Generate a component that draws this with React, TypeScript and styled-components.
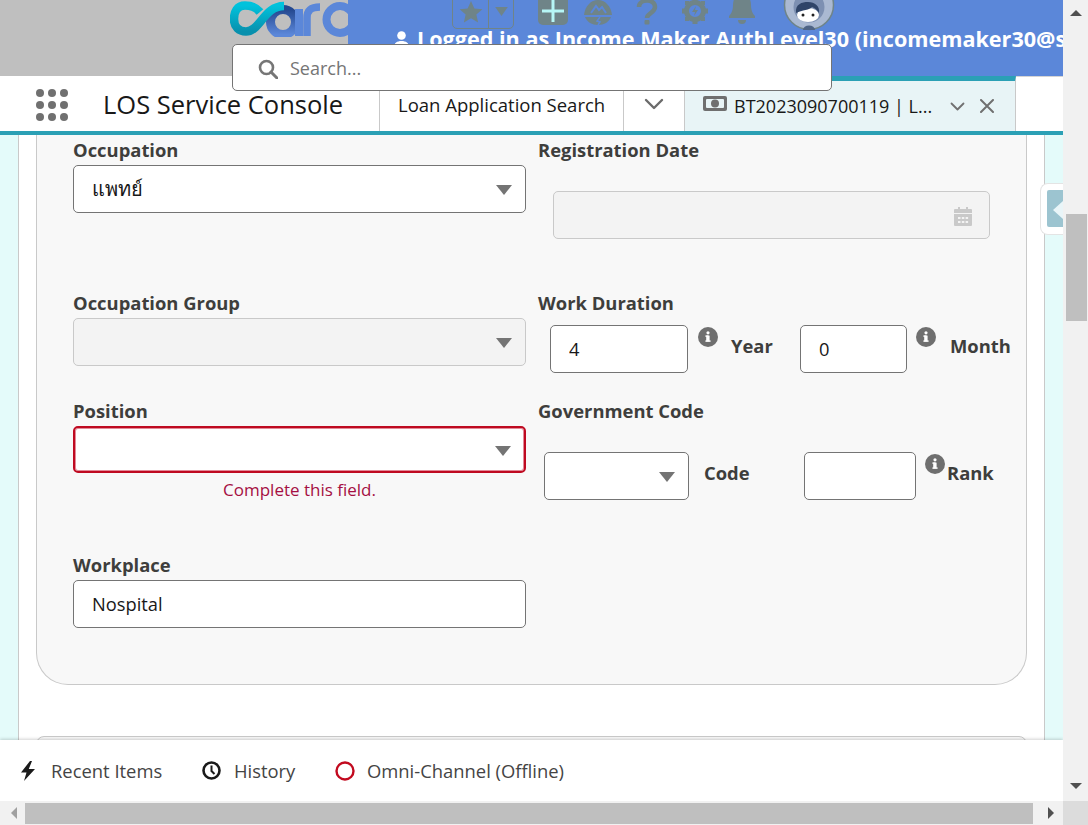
import React from "react";
import styled, { createGlobalStyle } from "styled-components";

const Global = createGlobalStyle`
  html, body { margin: 0; padding: 0; overflow: hidden; background: #fff; }
  * { box-sizing: border-box; }
  body { font-family: "Open Sans", "Noto Sans", "Liberation Sans", sans-serif; color: #181818; }
`;

const Page = styled.div`
  width: 1088px; height: 825px; display: grid; overflow: hidden;
  grid-template-columns: 1063px 25px; grid-template-rows: 801px 24px; position: relative;
`;
const Main = styled.main`display: flex; flex-direction: column; height: 801px; overflow: hidden; position: relative;`;

const Header = styled.header`height: 76px; flex: none; display: flex; background: #bfbfbf; overflow: hidden;`;
const LogoSlot = styled.div`width: 348px; flex: none; padding-left: 230px; display: flex; align-items: flex-start;`;
const Blue = styled.div`flex: 1; background: #5b87d9; position: relative; min-width: 0; overflow: hidden;`;
const UserLine = styled.div`
  position: absolute; left: 46px; top: 26px; white-space: nowrap; color: #fff; font-weight: 700; font-size: 21.6px; line-height: 26px;
  display: flex; align-items: center; gap: 8px;
`;
const Tools = styled.div`position: absolute; top: 0; left: 0; width: 100%; height: 40px;`;
const FavBox = styled.div`
  position: absolute; left: 104px; top: -6px; width: 62px; height: 35px; border: 1px solid #6f8488; border-radius: 5px;
  display: grid; grid-template-columns: 36px 1fr; align-items: center; justify-items: center;
  & > :first-child { border-right: 1px solid #6f8488; }
`;
const FavCell = styled.div`width: 100%; height: 100%; display: flex; align-items: center; justify-content: center;`;
const PlusBtn = styled.div`
  position: absolute; left: 190px; top: -6px; width: 30px; height: 31px; background: #6f8488; border-radius: 5px;
  display: flex; align-items: center; justify-content: center; padding-top: 2px;
`;
const ToolIcon = styled.div<{ $x: number; $y?: number }>`position: absolute; left: ${p => p.$x}px; top: ${p => p.$y ?? 0}px; line-height: 0;`;

const SearchBox = styled.div`
  position: absolute; z-index: 5; left: 232px; top: 44px; width: 600px; height: 47px; background: #fff; border: 1px solid #747474; border-radius: 5px;
  display: flex; align-items: center; gap: 12px; padding: 2px 0 0 25px;
`;
const SearchInput = styled.input`
  border: 0; outline: 0; background: none; flex: 1; font: 400 18px "Open Sans", sans-serif; color: #555; padding: 0; margin-top: -2px;
  &::placeholder { color: #757575; opacity: 1; }
`;

const Nav = styled.nav`height: 59px; flex: none; background: #fff; border-bottom: 4px solid #2ba0b5; display: flex; align-items: stretch;`;
const Brand = styled.div`width: 379px; flex: none; display: flex; align-items: center; gap: 35px; padding: 1px 0 0 36px;`;
const Waffle = styled.div`width: 32px; margin-top: 2px; display: grid; grid-template-columns: repeat(3, 8px); gap: 4px;`;
const Dot = styled.span`width: 8px; height: 8px; border-radius: 50%; background: #707070;`;
const AppTitle = styled.div`font-size: 25.5px; line-height: 30px; color: #181818; white-space: nowrap;`;
const TabPlain = styled.div`
  width: 244px; flex: none; border-left: 1px solid #c9c9c9; padding-left: 18px; display: flex; align-items: center;
  font-size: 18.5px; white-space: nowrap; padding-top: 2px;
`;
const TabMenu = styled.div`width: 61px; flex: none; border-left: 1px solid #c9c9c9; display: flex; align-items: center; justify-content: center;`;
const TabActive = styled.div`
  width: 332px; flex: none; background: #e8f4f6; border-left: 1px solid #c9c9c9; border-right: 1px solid #c9c9c9; border-top: 5px solid #2ba0b5;
  display: flex; align-items: center; padding: 0 0 0 18px; font-size: 18px; white-space: nowrap;
`;
const MoneyIcon = styled.span`line-height: 0; margin-top: -5px; flex: none;`;
const TabText = styled.span`margin-left: 7px; width: 205px; flex: none;`;
const TabIcons = styled.div`display: flex; align-items: center; gap: 15px; margin-left: 11px;`;
const NavRest = styled.div`flex: 1; background: #fff; border-top: 1px solid #d4d4d4;`;

const Content = styled.div`flex: 1; min-height: 0; background: #e4fbfa; padding: 0 18px 0 18px; display: flex; overflow: hidden; position: relative;`;
const Panel = styled.div`flex: 1; background: #fff; border-left: 1px solid #c9c9c9; border-right: 1px solid #c9c9c9; padding: 0 17px; min-width: 0;`;
const Card = styled.section`
  height: 550px; background: #f8f8f8; border: 1px solid #c9c9c9; border-top: 0; border-radius: 0 0 32px 32px; padding: 5px 0 0 36px;
  display: grid; grid-template-columns: 453px 1fr; column-gap: 12px; grid-template-rows: 153px 108px 154px 1fr;
`;
const NextCard = styled.div`height: 60px; margin-top: 51px; background: #f8f8f8; border: 1px solid #c9c9c9; border-radius: 8px;`;

const Field = styled.div`min-width: 0;`;
const Label = styled.div`font-weight: 700; font-size: 18.4px; line-height: 20px; color: #3e3e3c; margin-bottom: 5px; white-space: nowrap;`;
const SelectBox = styled.div<{ $w?: number; $disabled?: boolean; $error?: boolean }>`
  width: ${p => p.$w ?? 453}px; height: ${p => (p.$error ? 47 : 48)}px; flex: none; border-radius: 5px; position: relative;
  background: ${p => (p.$disabled ? "#f3f3f3" : "#fff")};
  border: ${p => (p.$error ? "2px solid #bf0a21" : p.$disabled ? "1px solid #c9c9c9" : "1px solid #747474")};
  ${p => (p.$error ? "box-shadow: inset 0 0 0 1px #e38a98;" : "")}
  display: flex; align-items: center; padding-left: 18px; font-size: 20px; color: #181818;
`;
const Caret = styled.span`
  position: absolute; right: 13px; top: 50%; margin-top: -4px; width: 0; height: 0;
  border-left: 8px solid transparent; border-right: 8px solid transparent; border-top: 10px solid #747474;
`;
const ErrorText = styled.div`width: 453px; text-align: center; color: #a50f43; font-size: 17px; line-height: 20px; margin-top: 7px;`;
const TextBox = styled.input<{ $w?: number }>`
  width: ${p => (p.$w ? `${p.$w}px` : "100%")}; height: 48px; flex: none; border: 1px solid #747474; border-radius: 5px; background: #fff; outline: 0;
  font: 400 18.3px "Open Sans", sans-serif; color: #181818; padding: 0 18px 2px; margin: 0;
`;
const DateBox = styled.div`
  width: 437px; height: 48px; margin: 31px 0 0 15px; background: #f3f3f3; border: 1px solid #c9c9c9; border-radius: 5px;
  display: flex; align-items: center; justify-content: flex-end; padding: 3px 17px 0 0; line-height: 0;
`;
const InlineRow = styled.div<{ $ml: number; $mt: number }>`display: flex; align-items: flex-start; margin: ${p => p.$mt}px 0 0 ${p => p.$ml}px;`;
const InfoWrap = styled.span<{ $ml: number; $mt?: number }>`margin: ${p => p.$mt ?? 2}px 0 0 ${p => p.$ml}px; line-height: 0; flex: none;`;
const SideLabel = styled.span<{ $ml: number; $w?: number }>`
  font-weight: 700; font-size: 18.4px; line-height: 20px; color: #3e3e3c; margin-left: ${p => p.$ml}px; margin-top: 11px;
  ${p => (p.$w ? `width: ${p.$w}px;` : "")} flex: none;
`;
const Handle = styled.div`
  position: absolute; right: 0; top: 48px; width: 23px; height: 52px; background: #fff; border: 1px solid #e4e4e4; border-right: 0;
  border-radius: 8px 0 0 8px; padding: 6px 0 7px 6px; display: flex;
`;
const HandleInner = styled.div`flex: 1; background: #9cc4d0; border-radius: 2px 0 0 2px; display: flex; align-items: center; justify-content: flex-end; padding-top: 3px;`;
const HandleArrow = styled.span`width: 0; height: 0; border-top: 9px solid transparent; border-bottom: 9px solid transparent; border-right: 10px solid #e9f5f8;`;

const Footer = styled.footer`
  height: 61px; margin-top: -1px; flex: none; background: #fff; position: relative; z-index: 2; box-shadow: 0 -1px 3px rgba(0,0,0,.18);
  display: flex; align-items: center; padding: 0 0 0 20px; font-size: 18.4px; color: #444;
`;
const FootItem = styled.div<{ $gap: number; $w: number }>`display: flex; align-items: center; gap: ${p => p.$gap}px; width: ${p => p.$w}px; flex: none; white-space: nowrap; line-height: 0;`;
const FootLabel = styled.span`line-height: 24px;`;

const VBar = styled.div`grid-column: 2; grid-row: 1; background: #f1f1f1; display: flex; flex-direction: column; align-items: center; padding-left: 1px;`;
const VArrow = styled.span<{ $up?: boolean }>`
  width: 0; height: 0; border-left: 6px solid transparent; border-right: 6px solid transparent; flex: none;
  ${p => (p.$up ? "border-bottom: 6px solid #505050; margin-top: 10px;" : "border-top: 6px solid #505050; margin-top: 462px;")}
`;
const VThumb = styled.div`width: 21px; height: 107px; background: #bfbfbf; margin-top: 198px; flex: none;`;
const HBar = styled.div`grid-column: 1; grid-row: 2; background: #f1f1f1; display: flex; align-items: center;`;
const HArrow = styled.span<{ $left?: boolean }>`
  width: 0; height: 0; border-top: 6px solid transparent; border-bottom: 6px solid transparent; flex: none;
  ${p => (p.$left ? "border-right: 6px solid #a0a0a0; margin: 0 8px 0 11px;" : "border-left: 6px solid #505050; margin-left: 15px;")}
`;
const HThumb = styled.div`width: 1008px; height: 21px; background: #bfbfbf; flex: none;`;
const Corner = styled.div`grid-column: 2; grid-row: 2; background: #dcdcdc;`;

const ICON = "#6f8488";
const BLUE = "#5b87d9";
const Info = () => (
  <svg width="20" height="20" viewBox="0 0 20 20"><circle cx="10" cy="10" r="10" fill="#6f6f6f" /><rect x="8.2" y="8.6" width="3.4" height="6" rx=".5" fill="#fff" /><rect x="7.4" y="8.4" width="3" height="1.4" fill="#fff" /><rect x="7.4" y="13.4" width="5.2" height="1.4" fill="#fff" /><circle cx="10" cy="5.8" r="1.6" fill="#fff" /></svg>
);
const Chevron = ({ w = 20, c = "#6b6b6b", sw = 2.4 }: { w?: number; c?: string; sw?: number }) => (
  <svg width={w} height={w * 0.6} viewBox="0 0 20 12"><path d="M2 2l8 8 8-8" fill="none" stroke={c} strokeWidth={sw} strokeLinecap="round" strokeLinejoin="round" /></svg>
);

const Logo = () => (
  <svg width="118" height="37" viewBox="0 0 118 37">
    <defs>
      <linearGradient id="t" x1="0" y1="0" x2="0" y2="1"><stop offset="0" stopColor="#00c2dc" /><stop offset="1" stopColor="#0890ad" /></linearGradient>
      <linearGradient id="b" x1="0" y1="0" x2="0" y2="1"><stop offset="0" stopColor="#24488f" /><stop offset="1" stopColor="#5b87d9" /></linearGradient>
    </defs>
    <circle cx="53" cy="22" r="12.500" fill="none" stroke="url(#b)" strokeWidth="9" />
    <rect x="65" y="9" width="8" height="27" fill={BLUE} />
    <path d="M30 12C26 7 22 5.500 15 5.500C7 5.500 4 12 4 19C4 27 9 31.500 16 31.500C30 31.500 34 6 54 6" fill="none" stroke="url(#t)" strokeWidth="8.500" />
    <path d="M77 36V18C77 10 81 7 90 7" fill="none" stroke={BLUE} strokeWidth="7.500" />
    <circle cx="110" cy="19.500" r="13.500" fill="none" stroke={BLUE} strokeWidth="8" />
  </svg>
);

const Avatar = () => (
  <svg width="54" height="34" viewBox="0 0 54 34">
    <circle cx="27" cy="5" r="24.500" fill="#aab9d2" stroke="#6f8488" strokeWidth="1.500" />
    <circle cx="27" cy="7" r="15.500" fill="#7d90b2" />
    <ellipse cx="26" cy="15" rx="11" ry="7" fill="#fff" />
    <path d="M14 13C13 4 20 2 26 2C33 2 38 6 37 13C35 10 33 8 30 7C28 10 20 10 14 13Z" fill="#2f4468" />
    <circle cx="21" cy="15" r="1.500" fill="#222" /><circle cx="31" cy="15" r="1.500" fill="#222" />
    <path d="M21 30a6 4.500 0 0 1 12 0z" fill="#4e6486" />
  </svg>
);

export default function App() {
  return (
    <Page>
      <Global />
      <Main>
        <Header>
          <LogoSlot><Logo /></LogoSlot>
          <Blue>
            <Tools>
              <FavBox>
                <FavCell><svg width="24" height="23" viewBox="0 0 30 28"><path d="M15 1l4.200 9.200 10 1-7.500 6.600 2.200 9.800L15 22.500 6.100 27.600l2.200-9.800L.8 11.200l10-1z" fill={ICON} /></svg></FavCell>
                <FavCell><svg width="13" height="9" viewBox="0 0 14 10"><path d="M0 0h14L7 10z" fill={ICON} /></svg></FavCell>
              </FavBox>
              <PlusBtn><svg width="22" height="22" viewBox="0 0 22 22"><path d="M11 0v22M0 11h22" stroke="#b6f6f6" strokeWidth="3" /></svg></PlusBtn>
              <ToolIcon $x={236}>
                <svg width="28" height="26" viewBox="0 0 28 26">
                  <path d="M0 15C1 6 7 0 14 0C21 0 27 6 28 15Z" fill={ICON} />
                  <path d="M7 13L12 6L15 10L18 7L22 13" fill="none" stroke={BLUE} strokeWidth="2" />
                  <path d="M1 17H27C25 22 20 25 14 25C8 25 3 22 1 17Z" fill={ICON} />
                  <path d="M16 17l-3 4 3 1-2 3" fill="none" stroke={BLUE} strokeWidth="1.500" />
                </svg>
              </ToolIcon>
              <ToolIcon $x={288}><svg width="22" height="26" viewBox="0 0 22 26"><path d="M3 7C3-1 19-2 19 7c0 6-8 6-8 11" fill="none" stroke={ICON} strokeWidth="4.500" /><rect x="8.500" y="20" width="5" height="4.500" rx="1" fill={ICON} /></svg></ToolIcon>
              <ToolIcon $x={334} $y={-1}>
                <svg width="26" height="26" viewBox="0 0 26 26"><circle cx="13" cy="12" r="8.500" fill="none" stroke={ICON} strokeWidth="5" /><path d="M10.500-1h5v5h-5zM10.500 20h5v5h-5zM0 9.500h5v5H0zM21 9.500h5v5h-5zM3 2l4 0 0 4-4 0zM19 2l4 0 0 4-4 0zM3 18l4 0 0 4-4 0zM19 18l4 0 0 4-4 0z" fill={ICON} /><path d="M14 7l-4 6h3l-1 4 4-6h-3z" fill={ICON} /></svg>
              </ToolIcon>
              <ToolIcon $x={380} $y={-6}>
                <svg width="28" height="30" viewBox="0 0 28 30"><path d="M14 0c6 0 9 5 9 11 0 6 2 9 4 11v2H1v-2c2-2 4-5 4-11C5 5 8 0 14 0Z" fill={ICON} /><path d="M10 26h8a4 4 0 0 1-8 0Z" fill={ICON} /></svg>
              </ToolIcon>
              <ToolIcon $x={434}><Avatar /></ToolIcon>
            </Tools>
            <UserLine>
              <svg width="15" height="16" viewBox="0 0 15 16"><circle cx="7.500" cy="4.500" r="4.300" fill="#fff" /><path d="M0 16c0-4 3-6 7.500-6s7.500 2 7.500 6z" fill="#fff" /></svg>
              Logged in as Income Maker AuthLevel30 (incomemaker30@sc.co.th)
            </UserLine>
          </Blue>
        </Header>
        <SearchBox>
          <svg width="20" height="20" viewBox="0 0 20 20"><circle cx="8.500" cy="8.500" r="6.500" fill="none" stroke="#767676" strokeWidth="2.600" /><path d="M13 13l6 6" stroke="#767676" strokeWidth="3" strokeLinecap="round" /></svg>
          <SearchInput placeholder="Search..." readOnly />
        </SearchBox>
        <Nav>
          <Brand>
            <Waffle>{Array.from({ length: 9 }, (_, i) => <Dot key={i} />)}</Waffle>
            <AppTitle>LOS Service Console</AppTitle>
          </Brand>
          <TabPlain>Loan Application Search</TabPlain>
          <TabMenu><Chevron /></TabMenu>
          <TabActive>
            <MoneyIcon><svg width="24" height="15" viewBox="0 0 24 15"><rect width="24" height="15" rx="2" fill="#6f6f6f" /><rect x="3" y="3" width="18" height="9" rx="1" fill="#e8f4f6" /><circle cx="12" cy="7.500" r="4" fill="#6f6f6f" /></svg></MoneyIcon>
            <TabText>BT2023090700119 | L...</TabText>
            <TabIcons>
              <Chevron w={15} c="#707070" />
              <svg width="14" height="14" viewBox="0 0 14 14"><path d="M1 1l12 12M13 1L1 13" stroke="#707070" strokeWidth="2" strokeLinecap="round" /></svg>
            </TabIcons>
          </TabActive>
          <NavRest />
        </Nav>
        <Content>
          <Panel>
            <Card>
              <Field>
                <Label>Occupation</Label>
                <SelectBox>แพทย์<Caret /></SelectBox>
              </Field>
              <Field>
                <Label>Registration Date</Label>
                <DateBox>
                  <svg width="18" height="20" viewBox="0 0 18 20"><path d="M4 0h2v3H4zM12 0h2v3h-2z" fill="#c9c9c9" /><path d="M1 2h16a1 1 0 0 1 1 1v3H0V3a1 1 0 0 1 1-1Z" fill="#c9c9c9" /><path fillRule="evenodd" d="M0 7h18v11a1 1 0 0 1-1 1H1a1 1 0 0 1-1-1ZM4 10v2h2.500v-2ZM7.800 10v2h2.500v-2ZM11.600 10v2h2.500v-2ZM4 14v2h2.500v-2ZM7.800 14v2h2.500v-2ZM11.600 14v2h2.500v-2Z" fill="#c9c9c9" /></svg>
                </DateBox>
              </Field>
              <Field>
                <Label>Occupation Group</Label>
                <SelectBox $disabled><Caret /></SelectBox>
              </Field>
              <Field>
                <Label>Work Duration</Label>
                <InlineRow $ml={12} $mt={12}>
                  <TextBox $w={138} value="4" readOnly />
                  <InfoWrap $ml={10}><Info /></InfoWrap>
                  <SideLabel $ml={13} $w={69}>Year</SideLabel>
                  <TextBox $w={107} value="0" readOnly />
                  <InfoWrap $ml={9}><Info /></InfoWrap>
                  <SideLabel $ml={14}>Month</SideLabel>
                </InlineRow>
              </Field>
              <Field>
                <Label>Position</Label>
                <SelectBox $error><Caret /></SelectBox>
                <ErrorText>Complete this field.</ErrorText>
              </Field>
              <Field>
                <Label>Government Code</Label>
                <InlineRow $ml={6} $mt={31}>
                  <SelectBox $w={145}><Caret /></SelectBox>
                  <SideLabel $ml={15} $w={100}>Code</SideLabel>
                  <TextBox $w={112} readOnly />
                  <InfoWrap $ml={9} $mt={2}><Info /></InfoWrap>
                  <SideLabel $ml={2}>Rank</SideLabel>
                </InlineRow>
              </Field>
              <Field>
                <Label>Workplace</Label>
                <TextBox value="Nospital" readOnly />
              </Field>
            </Card>
            <NextCard />
          </Panel>
          <Handle><HandleInner><HandleArrow /></HandleInner></Handle>
        </Content>
        <Footer>
          <FootItem $gap={15} $w={182}>
            <svg width="16" height="20" viewBox="0 0 16 20"><path d="M10 0L1 11.500h5.500L4 20l11-12H8.800L12 0z" fill="#1a1a1a" /></svg>
            <FootLabel>Recent Items</FootLabel>
          </FootItem>
          <FootItem $gap={13} $w={133}>
            <svg width="19" height="19" viewBox="0 0 19 19"><circle cx="9.500" cy="9.500" r="8" fill="none" stroke="#1a1a1a" strokeWidth="2.600" /><path d="M9.500 4.500V10l3 3" fill="none" stroke="#1a1a1a" strokeWidth="2" /></svg>
            <FootLabel>History</FootLabel>
          </FootItem>
          <FootItem $gap={12} $w={240}>
            <svg width="20" height="20" viewBox="0 0 20 20"><circle cx="10" cy="10" r="8.500" fill="none" stroke="#c20a1f" strokeWidth="2.400" /></svg>
            <FootLabel>Omni-Channel (Offline)</FootLabel>
          </FootItem>
        </Footer>
      </Main>
      <VBar>
        <VArrow $up />
        <VThumb />
        <VArrow />
      </VBar>
      <HBar>
        <HArrow $left />
        <HThumb />
        <HArrow />
      </HBar>
      <Corner />
    </Page>
  );
}
